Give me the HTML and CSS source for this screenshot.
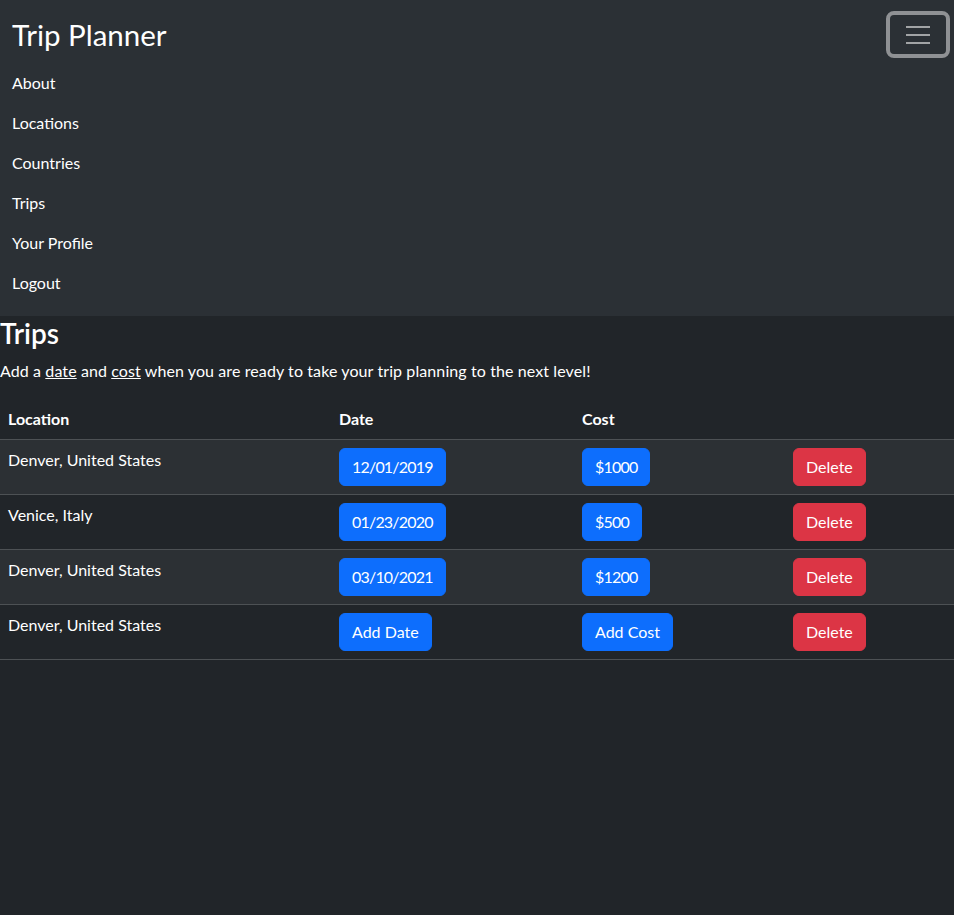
FILE: index.html
```html
<!DOCTYPE html>
<html lang="en">
<head>
<meta charset="utf-8">
<title>Trip Planner</title>
<link rel="stylesheet" href="styles.css">
</head>
<body>
<nav class="navbar">
  <div class="navbar-top">
    <a class="brand" href="#">Trip Planner</a>
    <button class="toggler" type="button" aria-label="Toggle navigation">
      <svg width="24" height="18" viewBox="0 0 24 18" aria-hidden="true">
        <path d="M0 1h24M0 9h24M0 17h24" stroke="#a2a4a6" stroke-width="2" fill="none"/>
      </svg>
    </button>
  </div>
  <ul class="nav-list">
    <li><a class="nav-link" href="#">About</a></li>
    <li><a class="nav-link" href="#">Locations</a></li>
    <li><a class="nav-link" href="#">Countries</a></li>
    <li><a class="nav-link" href="#">Trips</a></li>
    <li><a class="nav-link" href="#">Your Profile</a></li>
    <li><a class="nav-link" href="#">Logout</a></li>
  </ul>
</nav>
<main class="content">
  <h3 class="title">Trips</h3>
  <p class="lead-text">Add a <u>date</u> and <u>cost</u> when you are ready to take your trip planning to the next level!</p>
  <table class="trips">
    <colgroup>
      <col class="c-loc"><col class="c-date"><col class="c-cost"><col class="c-act">
    </colgroup>
    <thead>
      <tr><th>Location</th><th>Date</th><th>Cost</th><th></th></tr>
    </thead>
    <tbody>
      <tr class="odd">
        <td>Denver, United States</td>
        <td><button class="btn btn-primary num">12/01/2019</button></td>
        <td><button class="btn btn-primary num">$1000</button></td>
        <td><button class="btn btn-danger">Delete</button></td>
      </tr>
      <tr>
        <td>Venice, Italy</td>
        <td><button class="btn btn-primary num">01/23/2020</button></td>
        <td><button class="btn btn-primary num">$500</button></td>
        <td><button class="btn btn-danger">Delete</button></td>
      </tr>
      <tr class="odd">
        <td>Denver, United States</td>
        <td><button class="btn btn-primary num">03/10/2021</button></td>
        <td><button class="btn btn-primary num">$1200</button></td>
        <td><button class="btn btn-danger">Delete</button></td>
      </tr>
      <tr>
        <td>Denver, United States</td>
        <td><button class="btn btn-primary">Add Date</button></td>
        <td><button class="btn btn-primary">Add Cost</button></td>
        <td><button class="btn btn-danger">Delete</button></td>
      </tr>
    </tbody>
  </table>
</main>
</body>
</html>
```
FILE: styles.css
```css
* { box-sizing: border-box; }
html, body {
  margin: 0;
  background: #212529;
  color: #fff;
  font-family: Lato, "Noto Sans", "DejaVu Sans", sans-serif;
  font-size: 16px;
  line-height: 24px;
}
.navbar {
  background: #2b3035;
  padding: 8px 0 13px;
}
.navbar-top {
  display: flex;
  justify-content: space-between;
  align-items: flex-start;
  height: 55px;
  padding: 0 4px 0 12px;
}
.brand {
  color: #fff;
  text-decoration: none;
  font-size: 29.5px;
  line-height: 42px;
  margin-top: 6px;
}
.toggler {
  width: 64px;
  height: 47px;
  margin-top: 3px;
  background: transparent;
  border: 4px solid #8f9194;
  border-radius: 8px;
  display: flex;
  align-items: center;
  justify-content: center;
  padding: 0;
}
.toggler svg { display: block; }
.nav-list {
  list-style: none;
  margin: 0;
  padding: 0 12px;
}
.nav-link {
  display: block;
  padding: 8px 0;
  color: #fff;
  text-decoration: none;
}
.content { padding: 0; }
.title {
  margin: 1px 0 8px;
  font-size: 28px;
  line-height: 1.2;
  font-weight: 600;
}
.lead-text {
  margin: 0 0 16px;
  letter-spacing: 0.1px;
}
.trips {
  width: 100%;
  table-layout: fixed;
  border-collapse: collapse;
  margin-bottom: 16px;
}
.c-loc { width: 331px; }
.c-date { width: 243px; }
.c-cost { width: 211px; }
.trips th, .trips td {
  text-align: left;
  vertical-align: top;
  padding: 8px;
  border-bottom: 1px solid #4d5154;
}
.trips th { font-weight: 700; }
.trips tr.odd td { background: #2c3034; }
.btn {
  font-family: inherit;
  font-size: 16px;
  line-height: 24px;
  padding: 6px 12px;
  border-radius: 6px;
  border: 1px solid transparent;
  color: #fff;
  cursor: pointer;
}
.num { font-variant-numeric: tabular-nums; letter-spacing: -0.8px; }
.btn-primary { background: #0d6efd; border-color: #0d6efd; }
.btn-danger { background: #dc3545; border-color: #dc3545; }
```
